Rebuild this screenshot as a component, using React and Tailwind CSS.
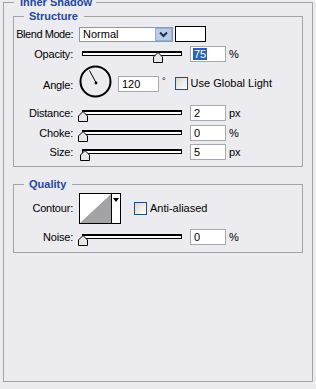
import React from "react";

const font = { fontFamily: '"Liberation Sans", Arial, sans-serif' };

function Slider({ value, max }) {
  const left = (value / max) * 100;
  return (
    <div className="relative ml-[9px] w-[100px] h-[5px] -mt-[2px] border border-t-2 border-black bg-white">
      <svg
        width="10"
        height="11"
        viewBox="0 0 10 11"
        className="absolute top-[-1px]"
        style={{ left: `${left - 5.5}px` }}
      >
        <polygon
          points="5,0.5 9.5,5 9.5,10.5 0.5,10.5 0.5,5"
          fill="#e6e6e6"
          stroke="#000"
          strokeWidth="1"
        />
      </svg>
    </div>
  );
}

function NumBox({ value, w = "w-[36px]", selected, className = "" }) {
  return (
    <div
      className={`${w} h-[16px] border border-[#a5a9b0] bg-white flex items-center pl-[2px] text-[11px] ${className}`}
    >
      {selected ? (
        <span className="bg-[#2f5fb8] text-white px-[1px] leading-[12px]">
          {value}
        </span>
      ) : (
        <span className="px-[1px]">{value}</span>
      )}
    </div>
  );
}

function Label({ children, className = "tracking-[-0.2px]" }) {
  return (
    <div
      className={`w-[59px] flex justify-end whitespace-nowrap text-[11px] text-black shrink-0 ${className}`}
    >
      <span>{children}</span>
    </div>
  );
}

function Checkbox() {
  return (
    <div className="w-[13px] h-[13px] border border-[#1f4f7e] bg-gradient-to-br from-[#d8d8d2] to-white shrink-0" />
  );
}

function SliderRow({ label, value, max, unit, selected, mt }) {
  return (
    <div className={`flex items-center h-[16px] ${mt}`}>
      <Label>{label}</Label>
      <Slider value={value} max={max} />
      <NumBox value={value} selected={selected} className="ml-[8px]" />
      <span className="ml-[3px] text-[11px]">{unit}</span>
    </div>
  );
}

export default function App() {
  return (
    <div
      className="w-[316px] h-[389px] bg-[#ecebf0] overflow-hidden text-black"
      style={font}
    >
      <fieldset className="ml-[3px] -mt-[4px] w-[310px] h-[386px] border border-[#a3a2a7]">
        <legend className="ml-[10px] pl-[6px] pr-[4px] text-[11px] leading-[12px] font-bold text-[#24489c]">
          Inner Shadow
        </legend>

        <fieldset className="ml-[9px] mt-[2px] w-[290px] h-[157px] border border-[#a3a2a7]">
          <legend className="ml-[10px] pl-[5px] pr-[6px] text-[11px] leading-[12px] font-bold text-[#24489c]">
            Structure
          </legend>

          <div className="flex items-center h-[16px] mt-[4px]">
            <Label className="text-[10.5px] tracking-[-0.45px]">Blend Mode:</Label>
            <div className="ml-[6px] w-[94px] h-[15px] border border-[#7f9db9] bg-white flex items-center">
              <span className="pl-[3px] flex-1 text-[11px]">Normal</span>
              <div className="w-[17px] h-[13px] bg-[#bccbe3] border border-[#9aaed0] flex items-center justify-center">
                <svg width="9" height="7" viewBox="0 0 9 7">
                  <path d="M1 1.5 L4.5 5 L8 1.5" fill="none" stroke="#1d2d50" strokeWidth="2" />
                </svg>
              </div>
            </div>
            <div className="ml-[2px] w-[31px] h-[16px] border border-black bg-white" />
          </div>

          <SliderRow label="Opacity:" value={75} max={100} unit="%" selected mt="mt-[4px]" />

          <div className="flex h-[32px] mt-[3px]">
            <Label className="mt-[12px] tracking-[-0.2px]">Angle:</Label>
            <svg width="33" height="33" viewBox="0 0 33 33" className="ml-[6px]">
              <circle cx="16.5" cy="16.5" r="15" fill="none" stroke="#000" strokeWidth="2" />
              <line x1="17" y1="17.5" x2="10.5" y2="5.5" stroke="#000" strokeWidth="1" />
              <circle cx="17" cy="18" r="1.4" fill="#000" />
            </svg>
            <NumBox value="120" w="w-[41px]" className="ml-[6px] mt-[11px]" />
            <span className="ml-[3px] mt-[11px] text-[9px] leading-[10px]">°</span>
            <div className="ml-[9px] mt-[12px] flex items-start">
              <Checkbox />
              <span className="ml-[3px] text-[11px] leading-[13px]">Use Global Light</span>
            </div>
          </div>

          <SliderRow label="Distance:" value={2} max={250} unit="px" mt="mt-[8px]" />
          <SliderRow label="Choke:" value={0} max={100} unit="%" mt="mt-[4px]" />
          <SliderRow label="Size:" value={5} max={250} unit="px" mt="mt-[3px]" />
        </fieldset>

        <fieldset className="ml-[9px] mt-[11px] w-[290px] h-[75px] border border-[#a3a2a7]">
          <legend className="ml-[10px] pl-[5px] pr-[6px] text-[11px] leading-[12px] font-bold text-[#24489c]">
            Quality
          </legend>

          <div className="flex items-center h-[31px] mt-[3px]">
            <Label>Contour:</Label>
            <div className="ml-[6px] w-[42px] h-[31px] border border-black bg-white flex">
              <svg width="31" height="29" viewBox="0 0 31 29" className="shrink-0">
                <polygon points="0,29 31,0 31,29" fill="#a3a3a5" />
              </svg>
              <div className="w-[10px] border-l border-black flex justify-center pt-[4px]">
                <svg width="6" height="4" viewBox="0 0 6 4">
                  <polygon points="0,0 6,0 3,4" fill="#000" />
                </svg>
              </div>
            </div>
            <div className="ml-[13px] flex items-center">
              <Checkbox />
              <span className="ml-[3px] text-[11px]">Anti-aliased</span>
            </div>
          </div>

          <SliderRow label="Noise:" value={0} max={100} unit="%" mt="mt-[5px]" />
        </fieldset>
      </fieldset>
    </div>
  );
}
